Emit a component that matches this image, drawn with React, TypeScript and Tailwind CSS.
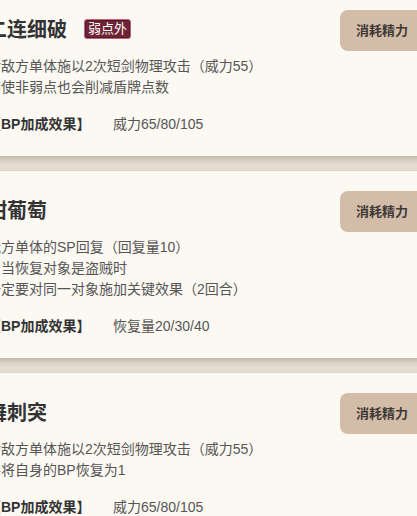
import React from 'react';

type Skill = {
  name: string;
  tag?: string;
  lines: string[];
  bonus: string;
};

const skills: Skill[] = [
  {
    name: '二连细破',
    tag: '弱点外',
    lines: ['对敌方单体施以2次短剑物理攻击（威力55）', '即使非弱点也会削减盾牌点数'],
    bonus: '威力65/80/105',
  },
  {
    name: '甜葡萄',
    lines: ['我方单体的SP回复（回复量10）', '・当恢复对象是盗贼时', '一定要对同一对象施加关键效果（2回合）'],
    bonus: '恢复量20/30/40',
  },
  {
    name: '舞刺突',
    lines: ['对敌方单体施以2次短剑物理攻击（威力55）', '并将自身的BP恢复为1'],
    bonus: '威力65/80/105',
  },
];

const font = { fontFamily: "'Liberation Sans', 'Noto Sans CJK SC', sans-serif" };

function SkillCard({ skill }: { skill: Skill }) {
  return (
    <div className="bg-[#fcf9f3] pl-5 pr-5 pb-[21px] shadow-[0_3px_7px_rgba(90,70,45,0.3)]">
      <div className="flex items-center justify-between pt-5">
        <div className="flex items-center gap-[17px]">
          <h3 className="text-[20px] font-bold leading-[41px] text-[#333333]">{skill.name}</h3>
          {skill.tag && (
            <span className="-mt-[3px] rounded-[3px] border border-[#c06474] bg-[#6e2436] px-[3px] text-[13px] leading-[18px] text-white shadow-[inset_0_0_0_1px_#561a29]">
              {skill.tag}
            </span>
          )}
        </div>
        <button className="h-[41px] rounded-lg bg-[#d3bda9] px-4 text-[13px] font-bold text-[#3f3a36]">消耗精力</button>
      </div>
      <div className="mt-[5px] text-[14px] leading-[21px] text-[#555555]">
        {skill.lines.map((line) => (
          <p key={line}>{line}</p>
        ))}
      </div>
      <div className="mt-4 flex text-[14px] leading-[21px]">
        <span className="w-[126px] font-bold text-[#333333]">【BP加成效果】</span>
        <span className="text-[#555555]">{skill.bonus}</span>
      </div>
    </div>
  );
}

export default function App() {
  return (
    <div className="h-[516px] w-[417px] overflow-hidden bg-[#e7dfd4]" style={font}>
      <div className="ml-[-33px] mt-[-10px] flex w-[477px] flex-col gap-[15px]">
        {skills.map((s) => (
          <SkillCard key={s.name} skill={s} />
        ))}
      </div>
    </div>
  );
}
